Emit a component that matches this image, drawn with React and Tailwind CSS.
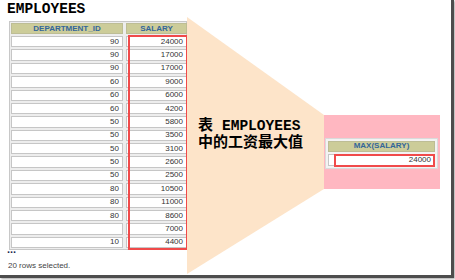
import { Fragment } from 'react';

const rows = [
  ['90', '24000'], ['90', '17000'], ['90', '17000'], ['60', '9000'],
  ['60', '6000'], ['60', '4200'], ['50', '5800'], ['50', '3500'],
  ['50', '3100'], ['50', '2600'], ['50', '2500'], ['80', '10500'],
  ['80', '11000'], ['80', '8600'], ['', '7000'], ['10', '4400'],
];

const sans = "font-['Liberation_Sans',Arial,sans-serif]";
const headCell = `flex items-center justify-center bg-[#cccc99] border border-[#bdbd95] text-[8px] leading-none font-bold text-[#336699] ${sans}`;
const dataCell = `flex items-center justify-end pr-[3px] bg-white border border-[#c6c6c6] text-[8px] leading-none text-[#333] ${sans}`;

function EmployeesTable() {
  return (
    <div className="relative ml-[2px] mt-[4px] w-[178px] border border-[#c8c8c8] bg-[#ededed] p-px">
      <div className="grid h-[225px] grid-cols-[112px_61px] grid-rows-[11px_repeat(16,minmax(0,1fr))] gap-x-[3px] gap-y-[2px]">
        <div className={headCell}>DEPARTMENT_ID</div>
        <div className={headCell}>SALARY</div>
        {rows.map(([dept, sal], i) => (
          <Fragment key={i}>
            <div className={dataCell}>{dept}</div>
            <div className={dataCell}>{sal}</div>
          </Fragment>
        ))}
      </div>
      {/* highlight round the salary column */}
      <div className="absolute left-[118px] top-[13px] w-[60px] h-[215px] border-2 border-[#f04a4a]" />
    </div>
  );
}

function MaxTable() {
  return (
    <div className="w-[113px] h-[31px] border border-[#dadada] bg-[#f3f3f3] p-[2px] flex flex-col gap-[2px]">
      <div className={`h-[11px] ${headCell}`}>MAX(SALARY)</div>
      <div className={`relative h-[13px] ${dataCell}`}>
        24000
        <div className="absolute left-[5px] -top-px -right-px -bottom-[2px] border-2 border-[#f04a4a]" />
      </div>
    </div>
  );
}

export default function App() {
  return (
    <div className="w-[455px] h-[280px] bg-white overflow-hidden">
      <div className="flex w-[454px] h-[278px] bg-white border-r-[3px] border-b-[3px] border-[#4d4d4d] shadow-[1px_1px_2px_rgba(0,0,0,0.35)]">
        {/* left: query result */}
        <div className="w-[187px] shrink-0 pl-[7px] pt-px flex flex-col">
          <div className="text-[14.5px] leading-[16px] font-bold text-black font-['Liberation_Mono','Courier_New',monospace]">
            EMPLOYEES
          </div>
          <EmployeesTable />
          <div className="-mt-[6px] text-[11px] leading-[11px] font-bold text-[#1c2850] font-['Liberation_Sans',Arial,sans-serif]">
            ...
          </div>
          <div className={`mt-[6px] pl-px text-[8px] leading-[10px] text-[#444] ${sans}`}>
            20 rows selected.
          </div>
        </div>

        {/* right: callout */}
        <div className="relative flex-1 flex">
          <svg className="absolute left-0 top-0" width="264" height="275" viewBox="0 0 264 275">
            <polygon points="0,17 137,115 137,189 0,274" fill="#fde4c9" />
          </svg>
          <div className="relative w-[137px] shrink-0 pl-[11px] pt-[118px] text-[15px] leading-[17px] font-bold text-black font-['Liberation_Mono','Noto_Sans_CJK_SC',monospace]">
            <div>表 <span className="text-[14.5px]">EMPLOYEES</span></div>
            <div>中的工资最大值</div>
          </div>
          <div className="relative mt-[115px] w-[116px] h-[74px] bg-[#ffb7c1] pt-[23px] pl-px">
            <MaxTable />
          </div>
        </div>
      </div>
    </div>
  );
}
